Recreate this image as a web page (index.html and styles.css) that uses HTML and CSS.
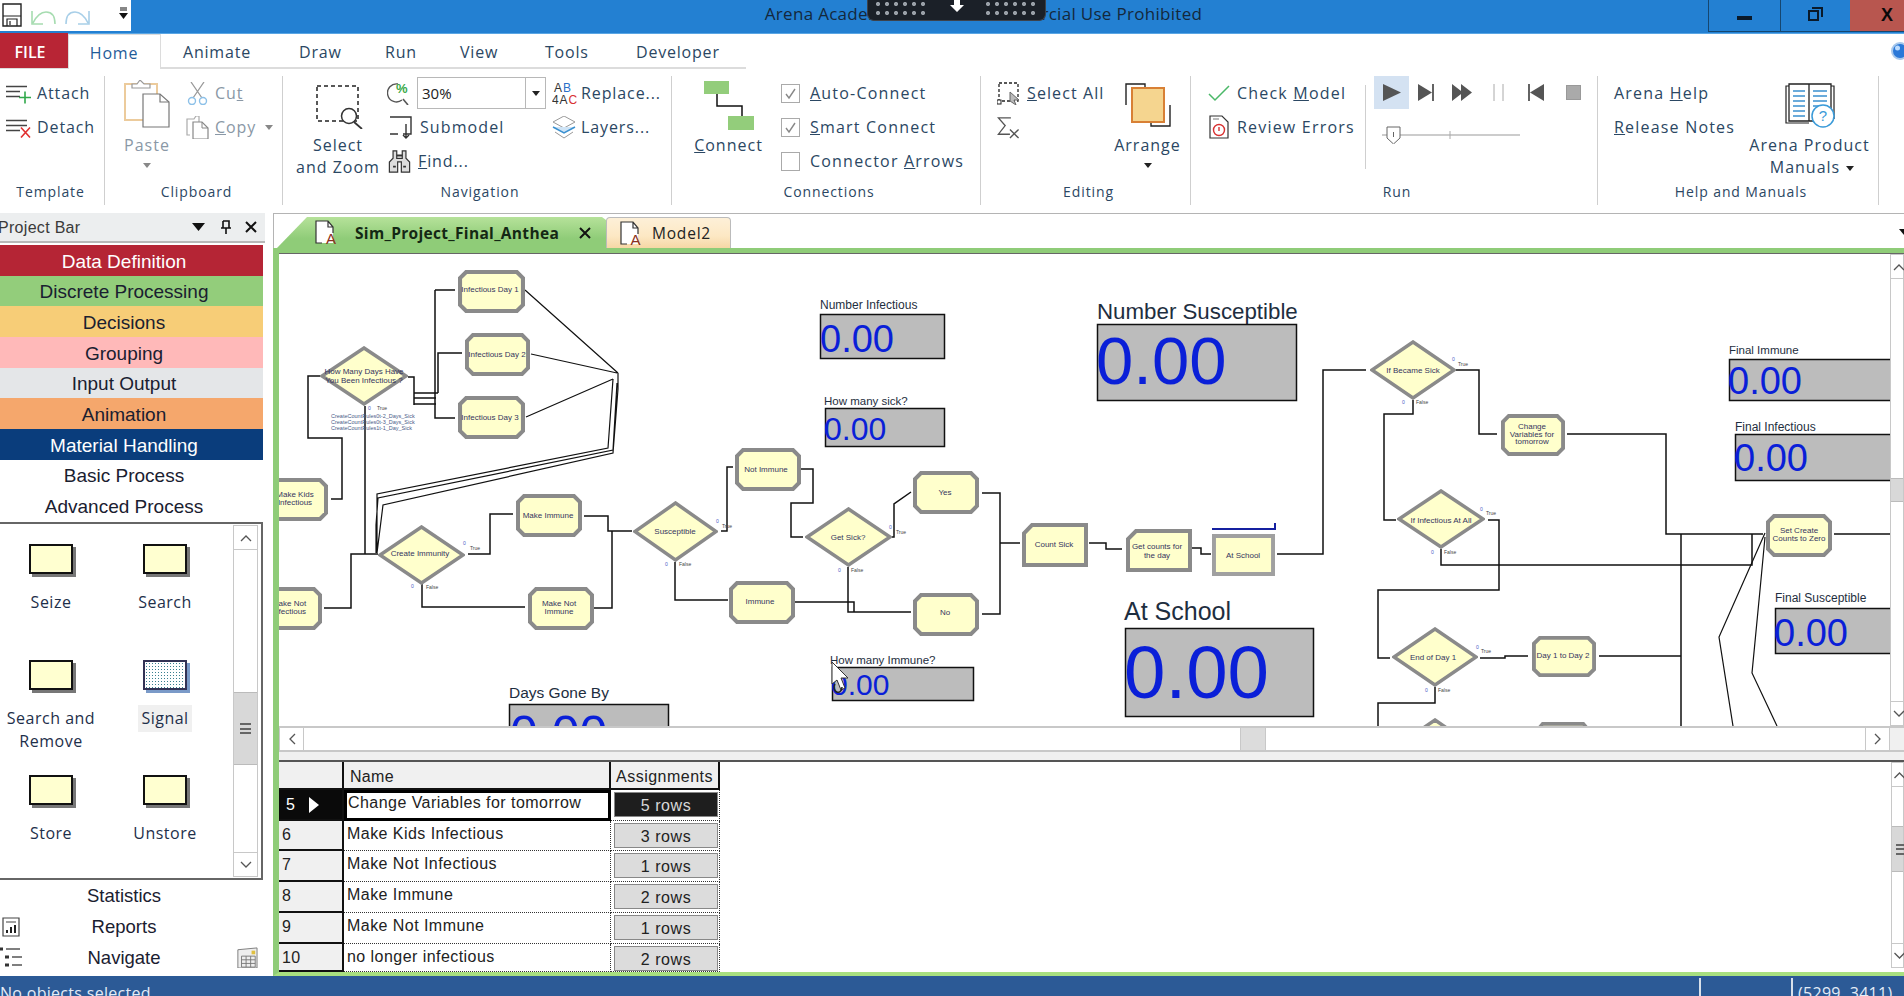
FILE: index.html
```html
<!DOCTYPE html>
<html lang="en">
<head>
<meta charset="utf-8">
<title>Arena Academic License - Commercial Use Prohibited</title>
<link rel="stylesheet" href="styles.css">
</head>
<body>
<div class="app">

  <header class="titlebar">
    <div class="qat">
      <svg class="qat-save" viewBox="0 0 20 24"><path d="M1 1H19V23H1Z" fill="none" stroke="#222" stroke-width="1.4"/><path d="M1 13H19M5 23V16H15V23M8 18V22" fill="none" stroke="#222" stroke-width="1.2"/></svg>
      <svg class="qat-undo" viewBox="0 0 25 16"><path d="M1 1V14H12M2 13C6 5 10 2 15 2C21 2 24 6 24 14" fill="none" stroke="#a6dcb0" stroke-width="1.6"/></svg>
      <svg class="qat-redo" viewBox="0 0 25 16"><path d="M24 1V14H13M23 13C19 5 15 2 10 2C4 2 1 6 1 14" fill="none" stroke="#a8cfe8" stroke-width="1.6"/></svg>
      <svg class="qat-more" viewBox="0 0 9 13"><path d="M1 1H8M1 3H8" stroke="#111" stroke-width="1.2"/><path d="M0 6H9L4.500 12Z" fill="#111"/></svg>
    </div>
    <div class="title">Arena Academic License - Commercial Use Prohibited</div>
    <div class="winbtns">
      <div class="winbtn"><span class="win-min"></span></div>
      <div class="winbtn"><svg class="win-icon" viewBox="0 0 15 14"><path d="M4 1H14V10M1 4H10V13H1Z" fill="none" stroke="#0a1a2a" stroke-width="2"/></svg></div>
      <div class="winbtn winclose">X</div>
    </div>
    <div class="remote">
      <span class="remote-dots"></span>
      <svg class="remote-arrow" viewBox="0 0 14 12"><path d="M4 0H10V5H14L7 12L0 5H4Z" fill="#fff"/></svg>
      <span class="remote-dots"></span>
    </div>
  </header>

  <nav class="tabrow">
    <div class="tabs">
      <div class="tab tab-file">FILE</div>
      <div class="tab tab-home">Home</div>
      <div class="tab tab-animate">Animate</div>
      <div class="tab tab-draw">Draw</div>
      <div class="tab tab-run">Run</div>
      <div class="tab tab-view">View</div>
      <div class="tab tab-tools">Tools</div>
      <div class="tab tab-dev">Developer</div>
    </div>
    <svg class="help-globe" viewBox="0 0 18 18"><circle cx="9" cy="9" r="8" fill="#2a78d8" stroke="#a8c8ec" stroke-width="2"/><circle cx="6.500" cy="6" r="2.500" fill="#bcdcff"/></svg>
  </nav>

  <section class="ribbon">
    <div class="group g-template">
      <div class="group-body">
        <div class="stack">
          <div class="rowbtn"><svg class="ic25" viewBox="0 0 25 20"><path d="M0 3H21M0 8H14M0 13H14" stroke="#444" stroke-width="1.4"/><path d="M19 8V20M13 14H25" stroke="#30a84a" stroke-width="1.6"/></svg><span>Attach</span></div>
          <div class="rowbtn"><svg class="ic25" viewBox="0 0 25 20"><path d="M0 3H21M0 8H21M0 13H14" stroke="#444" stroke-width="1.4"/><path d="M15 10L24 20M24 10L15 20" stroke="#e03030" stroke-width="1.6"/></svg><span>Detach</span></div>
        </div>
      </div>
      <div class="group-label">Template</div>
    </div>

    <div class="group g-clipboard">
      <div class="group-body">
        <div class="large paste">
          <svg class="large-icon ic-paste" viewBox="0 0 46 48"><path d="M1 4H33V40H1Z" fill="#fff" stroke="#eccb9c" stroke-width="2"/><path d="M8 8V4H13L16 0L20 4H26V8Z" fill="#fff" stroke="#999" stroke-width="1.2"/><path d="M19 14H36L45 22V47H19Z" fill="#fff" stroke="#777" stroke-width="1.2"/><path d="M36 14V22H45" fill="none" stroke="#777" stroke-width="1.2"/></svg>
          <div class="large-text dim">Paste</div>
          <i class="caret dimcaret"></i>
        </div>
        <div class="stack">
          <div class="rowbtn dim"><svg class="ic23" viewBox="0 0 21 23"><path d="M4 0L15 16M17 0L6 16" stroke="#999" stroke-width="1.3"/><circle cx="5" cy="19" r="3.500" fill="none" stroke="#8cc0e8" stroke-width="1.4"/><circle cx="16" cy="19" r="3.500" fill="none" stroke="#8cc0e8" stroke-width="1.4"/></svg><span>Cu<u>t</u></span></div>
          <div class="rowbtn dim"><svg class="ic23" viewBox="0 0 23 23"><path d="M4 19H1V3H8L10 0H13V6" fill="none" stroke="#aaa" stroke-width="1.2"/><path d="M7 6H16L22 12V23H7Z" fill="#fff" stroke="#888" stroke-width="1.2"/><path d="M16 6V12H22" fill="none" stroke="#888"/></svg><span><u>C</u>opy</span><i class="caret dimcaret caret-side"></i></div>
        </div>
      </div>
      <div class="group-label">Clipboard</div>
    </div>

    <div class="group g-nav">
      <div class="group-body">
        <div class="large zoomsel">
          <svg class="large-icon ic-select" viewBox="0 0 48 44"><path d="M1 1H42V36H1Z" fill="none" stroke="#222" stroke-width="1.5" stroke-dasharray="4 3"/><circle cx="33" cy="31" r="7.500" fill="#fff" stroke="#333" stroke-width="1.5"/><path d="M38 37L46 44" stroke="#333" stroke-width="1.8"/></svg>
          <div class="large-text">Select<br>and Zoom</div>
        </div>
        <div class="stack nav-mid">
          <div class="rowbtn">
            <svg class="ic25" viewBox="0 0 25 23"><path d="M11 2A9 9 0 1 0 15 18" fill="none" stroke="#555" stroke-width="1.4"/><path d="M16 17L21 23" stroke="#555" stroke-width="1.6"/><text class="pct" x="9" y="11">%</text></svg>
            <div class="combo"><span class="combo-val">30%</span><span class="combo-btn"><i class="caret"></i></span></div>
          </div>
          <div class="rowbtn submodel"><svg class="ic25" viewBox="0 0 25 23"><path d="M1 1H22V18H14M9 18H1Z" fill="none" stroke="#333" stroke-width="1.4"/><path d="M17 8V22M14 19L17 22L20 19" fill="none" stroke="#333" stroke-width="1.4"/></svg><span>Submodel</span></div>
          <div class="rowbtn"><svg class="ic25" viewBox="0 0 24 25"><path d="M5 1H9V9H15V1H19V9L23 13V24H14V13H10V24H1V13L5 9Z" fill="#ddd" stroke="#333" stroke-width="1.3"/><path d="M5 18H8M16 18H19M9 6H15" stroke="#333" stroke-width="2"/></svg><span class="find"><u>F</u>ind...</span></div>
        </div>
        <div class="stack nav-right">
          <div class="rowbtn"><svg class="ic25" viewBox="0 0 25 23"><text class="ab" x="2" y="10">A<tspan class="ab-blue">B</tspan></text><text class="ab" x="0" y="22">4A<tspan class="ab-red">C</tspan></text></svg><span>Replace...</span></div>
          <div class="rowbtn"><svg class="ic25" viewBox="0 0 25 23"><path d="M12 0L23 6L12 12L1 6Z" fill="#fff" stroke="#999"/><path d="M1 11L12 17L23 11" fill="#cfe4f6" stroke="#3a90d0" stroke-width="1.5"/><path d="M3 16L12 22L21 16" fill="none" stroke="#999"/></svg><span>Layers...</span></div>
        </div>
      </div>
      <div class="group-label">Navigation</div>
    </div>

    <div class="group g-conn">
      <div class="group-body">
        <div class="large connect">
          <svg class="large-icon ic-connect" viewBox="0 0 50 49"><rect x="0" y="0" width="25" height="13" fill="#93cd7b"/><rect x="24" y="35" width="26" height="14" fill="#93cd7b"/><path d="M13 13V25H38V35" fill="none" stroke="#111" stroke-width="1.5"/></svg>
          <div class="large-text"><u>C</u>onnect</div>
        </div>
        <div class="stack">
          <div class="rowbtn"><span class="check"><svg viewBox="0 0 17 17"><path d="M4 9L7 13L13 4" fill="none" stroke="#888" stroke-width="1.4"/></svg></span><span><u>A</u>uto-Connect</span></div>
          <div class="rowbtn"><span class="check"><svg viewBox="0 0 17 17"><path d="M4 9L7 13L13 4" fill="none" stroke="#888" stroke-width="1.4"/></svg></span><span><u>S</u>mart Connect</span></div>
          <div class="rowbtn"><span class="check"></span><span>Connector <u>A</u>rrows</span></div>
        </div>
      </div>
      <div class="group-label">Connections</div>
    </div>

    <div class="group g-edit">
      <div class="group-body">
        <div class="stack">
          <div class="rowbtn"><svg class="ic23" viewBox="0 0 23 23"><path d="M2 1H21V19H2Z" fill="none" stroke="#222" stroke-width="1.3" stroke-dasharray="3 2"/><rect x="0" y="18" width="4" height="4" fill="#fff" stroke="#222"/><path d="M13 10L22 18H17L19 23L13 19Z" fill="#bbb" stroke="#666"/></svg><span><u>S</u>elect All</span></div>
          <div class="rowbtn"><svg class="ic23" viewBox="0 0 23 24"><path d="M14 2H1L8 10L1 19H13" fill="none" stroke="#555" stroke-width="1.4"/><path d="M13 14L22 23M22 14L13 23" stroke="#555" stroke-width="1.4"/></svg></div>
        </div>
        <div class="large arrange">
          <svg class="large-icon ic-arrange" viewBox="0 0 46 44"><path d="M1 22V1H20V5" fill="none" stroke="#222" stroke-width="1.4"/><path d="M45 22V43H26V39" fill="none" stroke="#222" stroke-width="1.4"/><rect x="7" y="5" width="32" height="34" fill="#f5d58f" stroke="#d88035" stroke-width="2"/></svg>
          <div class="large-text">Arrange</div>
          <i class="caret"></i>
        </div>
      </div>
      <div class="group-label">Editing</div>
    </div>

    <div class="group g-run">
      <div class="group-body">
        <div class="stack">
          <div class="rowbtn"><svg class="ic22" viewBox="0 0 22 17"><path d="M1 9L7 15L21 1" fill="none" stroke="#4ab868" stroke-width="1.5"/></svg><span>Check <u>M</u>odel</span></div>
          <div class="rowbtn"><svg class="ic22 ic-review" viewBox="0 0 20 24"><path d="M1 1H13L19 7V23H1Z" fill="#fff" stroke="#333" stroke-width="1.2"/><path d="M4 4H10" stroke="#777"/><circle cx="10" cy="15" r="5.500" fill="#fff" stroke="#d83030" stroke-width="1.4"/><path d="M10 12V16" stroke="#d83030" stroke-width="1.4"/></svg><span>Review Errors</span></div>
        </div>
        <div class="run-sep"></div>
        <div class="transport">
          <div class="transport-row">
            <div class="t-play"><svg viewBox="0 0 18 17"><path d="M0 0L18 8.500L0 17Z" fill="#555"/></svg></div>
            <svg class="t-step" viewBox="0 0 16 17"><path d="M0 0L14 8.500L0 17Z" fill="#555"/><path d="M15 0V17" stroke="#222" stroke-width="1.4"/></svg>
            <svg class="t-ff" viewBox="0 0 20 17"><path d="M0 0L11 8.500L0 17ZM9 0L20 8.500L9 17Z" fill="#555"/></svg>
            <svg class="t-pause" viewBox="0 0 11 17"><path d="M1 0V17M10 0V17" stroke="#aaa"/></svg>
            <svg class="t-rew" viewBox="0 0 16 17"><path d="M16 0L2 8.500L16 17Z" fill="#555"/><path d="M1 0V17" stroke="#222" stroke-width="1.4"/></svg>
            <span class="t-stop"></span>
          </div>
          <div class="slider">
            <svg viewBox="0 0 138 18"><path d="M0 9H138" stroke="#bbb" stroke-width="1.6"/><path d="M68 5V13" stroke="#aaa"/><path d="M5 1H18V12L11.500 18L5 12Z" fill="#fff" stroke="#666"/><path d="M11.500 6V11" stroke="#666"/></svg>
          </div>
        </div>
      </div>
      <div class="group-label">Run</div>
    </div>

    <div class="group g-help">
      <div class="group-body">
        <div class="stack">
          <div class="rowbtn"><span>Arena <u>H</u>elp</span></div>
          <div class="rowbtn"><span><u>R</u>elease Notes</span></div>
        </div>
        <div class="large manuals">
          <svg class="large-icon ic-book" viewBox="0 0 50 45"><path d="M4 3H1V40H24" fill="none" stroke="#222" stroke-width="1.2"/><path d="M46 3H49V36" fill="none" stroke="#222" stroke-width="1.2"/><path d="M4 1H24V38H4ZM24 1H46V38H24Z" fill="#fff" stroke="#222" stroke-width="1.3"/><path d="M8 8H20M8 13H20M8 18H20M8 23H20M8 28H20M8 33H20M28 8H42M28 13H42M28 18H42M28 23H38" stroke="#3a90d0" stroke-width="1.3"/><circle cx="38" cy="33" r="11" fill="#fff" stroke="#3a9ad8" stroke-width="1.5"/><text class="qmark" x="38" y="38">?</text></svg>
          <div class="large-text">Arena Product<br><span class="manuals-line">Manuals<i class="caret caret-inline"></i></span></div>
        </div>
      </div>
      <div class="group-label">Help and Manuals</div>
    </div>
  </section>

  <main class="workspace">
    <aside class="panel">
      <div class="panel-head">
        <span class="panel-title">Project Bar</span>
        <svg class="panel-icon" viewBox="0 0 13 8"><path d="M0 0H13L6.500 8Z" fill="#111"/></svg>
        <svg class="panel-icon pin" viewBox="0 0 10 14"><path d="M2 1H8V8H10M0 8H10M5 8V14M2 1V8" fill="none" stroke="#111" stroke-width="1.6"/></svg>
        <svg class="panel-icon close" viewBox="0 0 12 12"><path d="M1 1L11 11M11 1L1 11" stroke="#111" stroke-width="2"/></svg>
      </div>
      <div class="cats">
        <div class="cat c-data">Data Definition</div>
        <div class="cat c-disc">Discrete Processing</div>
        <div class="cat c-dec">Decisions</div>
        <div class="cat c-grp">Grouping</div>
        <div class="cat c-io">Input Output</div>
        <div class="cat c-anim">Animation</div>
        <div class="cat c-mat">Material Handling</div>
        <div class="cat">Basic Process</div>
        <div class="cat">Advanced Process</div>
      </div>
      <div class="modules">
        <div class="module-grid">
          <div class="module"><span class="mod-ic"></span><span class="mod-label">Seize</span></div>
          <div class="module"><span class="mod-ic"></span><span class="mod-label">Search</span></div>
          <div class="module"><span class="mod-ic"></span><span class="mod-label">Search and<br>Remove</span></div>
          <div class="module"><span class="mod-ic mod-signal"></span><span class="mod-label mod-selected">Signal</span></div>
          <div class="module"><span class="mod-ic"></span><span class="mod-label">Store</span></div>
          <div class="module"><span class="mod-ic"></span><span class="mod-label">Unstore</span></div>
        </div>
        <div class="scroll-v scroll-mod">
          <div class="sb-btn"><svg viewBox="0 0 12 8"><path d="M1 7L6 2L11 7" fill="none" stroke="#555" stroke-width="1.3"/></svg></div>
          <div class="sb-track"><div class="sb-thumb"><span class="grip"></span></div></div>
          <div class="sb-btn"><svg viewBox="0 0 12 8"><path d="M1 1L6 6L11 1" fill="none" stroke="#555" stroke-width="1.3"/></svg></div>
        </div>
      </div>
      <div class="panel-foot">
        <div class="foot-row"><span></span><span class="foot-text">Statistics</span><span></span></div>
        <div class="foot-row"><svg class="foot-ic" viewBox="0 0 18 20"><path d="M1 1H17V19H1Z" fill="#fff" stroke="#444" stroke-width="1.2"/><path d="M4 5H14" stroke="#444"/><path d="M5 16V13M9 16V10M13 16V8" stroke="#222" stroke-width="2"/></svg><span class="foot-text">Reports</span><span></span></div>
        <div class="foot-row"><svg class="foot-ic" viewBox="0 0 22 21"><path d="M0 2H3M5 10H9M5 18H9" stroke="#333" stroke-width="3"/><path d="M6 2H20M12 10H22M12 18H22" stroke="#555" stroke-width="1.3"/></svg><span class="foot-text">Navigate</span><svg class="foot-ic foot-right" viewBox="0 0 22 23"><path d="M1 23V3L22 1V23Z" fill="#eee" stroke="#777"/><path d="M5 10H20V22H5ZM5 14H20M5 18H20M10 10V22M15 10V22" fill="none" stroke="#777"/><path d="M16 4H20V8H16Z" fill="#e0c040"/></svg></div>
      </div>
    </aside>

    <section class="doc">
      <div class="doctabs">
        <div class="doctab doctab-active">
          <svg class="doc-ic" viewBox="0 0 23 25"><path d="M1 1H13L18 7V23H1Z" fill="#fff"/><path d="M7 23H1V1H13L18 7V13M13 1V7H18" fill="none" stroke="#333" stroke-width="1.2"/><text class="doc-a" x="16" y="24">A</text></svg>
          <span class="doctab-name">Sim_Project_Final_Anthea</span>
          <svg class="doc-x" viewBox="0 0 12 12"><path d="M1 1L11 11M11 1L1 11" stroke="#111" stroke-width="2"/></svg>
        </div>
        <div class="doctab doctab-other">
          <svg class="doc-ic" viewBox="0 0 23 25"><path d="M1 1H13L18 7V23H1Z" fill="#fff"/><path d="M7 23H1V1H13L18 7V13M13 1V7H18" fill="none" stroke="#333" stroke-width="1.2"/><text class="doc-a" x="16" y="24">A</text></svg>
          <span>Model2</span>
        </div>
        <svg class="doctabs-more" viewBox="0 0 10 6"><path d="M0 0H10L5 6Z" fill="#111"/></svg>
      </div>

      <div class="docframe">
        <div class="canvas-row">
          <svg class="canvas" viewBox="279 254 1611 472" xmlns="http://www.w3.org/2000/svg">
            <defs>
              <symbol id="p" viewBox="0 0 66 43" preserveAspectRatio="none"><path d="M8 2H58L64 8V35L58 41H8L2 35V8Z" fill="#ffffcc" stroke="#8a8a8a" stroke-width="4"/></symbol>
              <symbol id="d" viewBox="0 0 88 60" preserveAspectRatio="none"><path d="M44 2L86 30L44 58L2 30Z" fill="#ffffcc" stroke="#8a8a8a" stroke-width="3.500"/></symbol>
              <symbol id="c" viewBox="0 0 66 43" preserveAspectRatio="none"><path d="M10 2H64V41H2V10Z" fill="#ffffcc" stroke="#8a8a8a" stroke-width="4"/></symbol>
              <symbol id="r" viewBox="0 0 64 43" preserveAspectRatio="none"><path d="M2 2H62V41H2Z" fill="#ffffcc" stroke="#a0a0a0" stroke-width="4"/></symbol>
            </defs>

            <g class="wires">
              <path d="M408 377H414V405M414 393H438M414 398H436M414 404H436M435 290H455M435 290V418H455M438 393V353H462"/>
              <path d="M320 376H308V438H342V499H331"/>
              <path d="M365 406V554M324 608H351V554H378"/>
              <path d="M468 554H490V514H513M422 584V607H525M584 516H608V531H632M594 608H612V531"/>
              <path d="M721 531H727V467H733M675 562V600H728M801 469H813V503H791V537H803"/>
              <path d="M892 537H894V504L911 492M848 567V612H911M795 602H854V612"/>
              <path d="M982 493H1000V614H982M1000 543H1020M1089 543H1106V549H1122M1192 548H1201V554H1211"/>
              <path d="M1277 554H1323V370H1366M1456 370H1479V434H1497M1413 400V414H1384V520H1396"/>
              <path d="M1567 434H1666V534H1763M1681 534V726M1488 520H1499V590H1378V658H1390M1441 549V565H1752V534"/>
              <path d="M1480 658H1505V656H1528M1599 656H1681M1435 687V703H1378V726M1834 534H1890"/>
            </g>
            <g class="wires-thin">
              <path d="M525 290L618 373M531 354L617 373M526 417L613 379"/>
              <path d="M618 373V389L613 453L383 505L377 553M613 379L608 448L377 494V553M617 383L613 450L378 498L376 525V553"/>
              <path d="M1765 533L1719 637L1733 726M1765 537L1760 590L1752 673L1777 726"/>
            </g>

            <use href="#p" x="458" y="270" width="67" height="43"/><text class="nt" x="490" y="292">Infectious Day 1</text>
            <use href="#p" x="465" y="333" width="65" height="43"/><text class="nt" x="497" y="357">Infectious Day 2</text>
            <use href="#p" x="458" y="396" width="67" height="43"/><text class="nt" x="490" y="420">Infectious Day 3</text>
            <use href="#d" x="320" y="346" width="88" height="60"/><text class="nt" x="364" y="374">How Many Days Have</text><text class="nt" x="364" y="383">You Been Infectious ?</text>
            <text class="sm blue" x="368" y="410">0</text><text class="sm" x="377" y="410">True</text>
            <text class="cc" x="331" y="418">CreateCountRules0t-2_Days_Sick</text>
            <text class="cc" x="331" y="424">CreateCountRules0t-3_Days_Sick</text>
            <text class="cc" x="331" y="430">CreateCountRules1t-1_Day_Sick</text>
            <use href="#p" x="262" y="478" width="66" height="43"/><text class="nt" x="295" y="497">Make Kids</text><text class="nt" x="295" y="505">Infectious</text>
            <use href="#p" x="256" y="587" width="66" height="43"/><text class="nt" x="289" y="606">Make Not</text><text class="nt" x="289" y="614">Infectious</text>
            <use href="#d" x="378" y="525" width="87" height="60"/><text class="nt" x="420" y="556">Create Immunity</text>
            <text class="sm blue" x="463" y="545">0</text><text class="sm" x="470" y="550">True</text><text class="sm blue" x="411" y="588">0</text><text class="sm" x="426" y="589">False</text>
            <use href="#p" x="516" y="494" width="66" height="43"/><text class="nt" x="548" y="518">Make Immune</text>
            <use href="#p" x="528" y="587" width="66" height="43"/><text class="nt" x="559" y="606">Make Not</text><text class="nt" x="559" y="614">Immune</text>
            <use href="#d" x="633" y="501" width="85" height="61"/><text class="nt" x="675" y="534">Susceptible</text>
            <text class="sm blue" x="716" y="523">0</text><text class="sm" x="722" y="528">True</text><text class="sm blue" x="665" y="566">0</text><text class="sm" x="679" y="566">False</text>
            <use href="#p" x="735" y="448" width="66" height="43"/><text class="nt" x="766" y="472">Not Immune</text>
            <use href="#d" x="805" y="507" width="87" height="60"/><text class="nt" x="848" y="540">Get Sick?</text>
            <text class="sm blue" x="889" y="529">0</text><text class="sm" x="896" y="534">True</text><text class="sm blue" x="838" y="572">0</text><text class="sm" x="851" y="572">False</text>
            <use href="#p" x="913" y="471" width="66" height="43"/><text class="nt" x="945" y="495">Yes</text>
            <use href="#p" x="913" y="593" width="66" height="43"/><text class="nt" x="945" y="615">No</text>
            <use href="#p" x="729" y="581" width="66" height="43"/><text class="nt" x="760" y="604">Immune</text>
            <use href="#c" x="1022" y="523" width="66" height="44"/><text class="nt" x="1054" y="547">Count Sick</text>
            <use href="#c" x="1126" y="529" width="66" height="43"/><text class="nt" x="1157" y="549">Get counts for</text><text class="nt" x="1157" y="558">the day</text>
            <use href="#r" x="1212" y="534" width="63" height="42"/><text class="nt" x="1243" y="558">At School</text>
            <path class="blue-line" d="M1212 529H1275V523"/>

            <text class="lab l12" x="820" y="309">Number Infectious</text>
            <rect class="vbox" x="820.500" y="314.500" width="124" height="44"/><text class="val v38" x="820" y="352">0.00</text>
            <text class="lab l115" x="824" y="405">How many sick?</text>
            <rect class="vbox" x="825.500" y="408.500" width="119" height="38"/><text class="val v32" x="824" y="439.500">0.00</text>
            <text class="lab l22" x="1097" y="319">Number Susceptible</text>
            <rect class="vbox" x="1097.500" y="324.500" width="199" height="76"/><text class="val v67" x="1096" y="384">0.00</text>
            <text class="lab l25" x="1124" y="620">At School</text>
            <rect class="vbox" x="1125.500" y="628.500" width="188" height="88"/><text class="val v74" x="1124" y="698">0.00</text>
            <text class="lab l115" x="830" y="664">How many Immune?</text>
            <rect class="vbox" x="832.500" y="667.500" width="141" height="33"/><text class="val v30" x="831" y="694.500">0.00</text>
            <text class="lab l155" x="509" y="698">Days Gone By</text>
            <rect class="vbox" x="509.500" y="704.500" width="159" height="60"/><text class="val v50" x="510" y="751">0.00</text>
            <path class="cursor" d="M832 662V684L837 680L841 690L845 688L841 678L848 678Z"/>
            <path class="cursor-ring" d="M835 684A4 5 0 1 0 842 687"/>

            <use href="#d" x="1370" y="340" width="86" height="60"/><text class="nt" x="1413" y="373">If Became Sick</text>
            <text class="sm blue" x="1452" y="361">0</text><text class="sm" x="1458" y="366">True</text><text class="sm blue" x="1402" y="404">0</text><text class="sm" x="1416" y="404">False</text>
            <use href="#p" x="1501" y="414" width="64" height="42"/><text class="nt" x="1532" y="429">Change</text><text class="nt" x="1532" y="436.500">Variables for</text><text class="nt" x="1532" y="444">tomorrow</text>
            <use href="#d" x="1397" y="489" width="88" height="60"/><text class="nt" x="1441" y="523">If Infectious At All</text>
            <text class="sm blue" x="1480" y="511">0</text><text class="sm" x="1486" y="515">True</text><text class="sm blue" x="1431" y="554">0</text><text class="sm" x="1444" y="554">False</text>
            <use href="#d" x="1392" y="627" width="86" height="60"/><text class="nt" x="1433" y="660">End of Day 1</text>
            <text class="sm blue" x="1476" y="649">0</text><text class="sm" x="1481" y="653">True</text><text class="sm blue" x="1425" y="692">0</text><text class="sm" x="1438" y="692">False</text>
            <use href="#p" x="1532" y="636" width="64" height="41"/><text class="nt" x="1563" y="658">Day 1 to Day 2</text>
            <use href="#p" x="1766" y="514" width="66" height="43"/><text class="nt" x="1799" y="533">Set Create</text><text class="nt" x="1799" y="541">Counts to Zero</text>
            <use href="#d" x="1392" y="718" width="86" height="60"/>
            <use href="#p" x="1536" y="722" width="54" height="41"/>

            <text class="lab l115" x="1729" y="354">Final Immune</text>
            <rect class="vbox" x="1729.500" y="359.500" width="200" height="41"/><text class="val v38" x="1728" y="394">0.00</text>
            <text class="lab l12" x="1735" y="431">Final Infectious</text>
            <rect class="vbox" x="1735.500" y="434.500" width="200" height="46"/><text class="val v38" x="1734" y="471">0.00</text>
            <text class="lab l12" x="1775" y="602">Final Susceptible</text>
            <rect class="vbox" x="1775.500" y="608.500" width="200" height="45"/><text class="val v38" x="1774" y="646">0.00</text>
          </svg>
          <div class="scroll-v scroll-canvas">
            <div class="sb-btn"><svg viewBox="0 0 12 8"><path d="M1 7L6 2L11 7" fill="none" stroke="#555" stroke-width="1.3"/></svg></div>
            <div class="sb-track"><div class="sb-thumb thumb-canvas"></div></div>
            <div class="sb-btn"><svg viewBox="0 0 12 8"><path d="M1 1L6 6L11 1" fill="none" stroke="#555" stroke-width="1.3"/></svg></div>
          </div>
        </div>
        <div class="scroll-h">
          <div class="sb-btn-h"><svg viewBox="0 0 8 12"><path d="M7 1L2 6L7 11" fill="none" stroke="#555" stroke-width="1.3"/></svg></div>
          <div class="sb-track-h"><div class="sb-thumb-h"></div></div>
          <div class="sb-btn-h"><svg viewBox="0 0 8 12"><path d="M1 1L6 6L1 11" fill="none" stroke="#555" stroke-width="1.3"/></svg></div>
          <div class="scroll-corner"></div>
        </div>
        <div class="sash"></div>
        <div class="tablepane">
          <div class="sheet">
            <div class="cell rh"></div><div class="cell hd name-hd">Name</div><div class="cell hd asg-hd">Assignments</div>
            <div class="cell rh rh-sel">5<svg class="row-arrow" viewBox="0 0 10 16"><path d="M0 0L10 8L0 16Z" fill="#fff"/></svg></div><div class="cell nm nm-sel">Change Variables for tomorrow</div><div class="cell as as-sel"><span class="rows rows-sel">5 rows</span></div>
            <div class="cell rh">6</div><div class="cell nm">Make Kids Infectious</div><div class="cell as"><span class="rows">3 rows</span></div>
            <div class="cell rh">7</div><div class="cell nm">Make Not Infectious</div><div class="cell as"><span class="rows">1 rows</span></div>
            <div class="cell rh">8</div><div class="cell nm">Make Immune</div><div class="cell as"><span class="rows">2 rows</span></div>
            <div class="cell rh">9</div><div class="cell nm">Make Not Immune</div><div class="cell as"><span class="rows">1 rows</span></div>
            <div class="cell rh">10</div><div class="cell nm">no longer infectious</div><div class="cell as"><span class="rows">2 rows</span></div>
          </div>
          <div class="scroll-v scroll-table">
            <div class="sb-btn"><svg viewBox="0 0 12 8"><path d="M1 7L6 2L11 7" fill="none" stroke="#555" stroke-width="1.3"/></svg></div>
            <div class="sb-track"><div class="sb-thumb thumb-table"><span class="grip"></span></div></div>
            <div class="sb-btn"><svg viewBox="0 0 12 8"><path d="M1 1L6 6L11 1" fill="none" stroke="#555" stroke-width="1.3"/></svg></div>
          </div>
        </div>
      </div>
    </section>
  </main>

  <footer class="status">
    <span class="status-msg">No objects selected</span>
    <span class="status-cell status-mid"></span>
    <span class="status-cell status-xy">(5299, 3411)</span>
  </footer>
</div>
</body>
</html>
```

FILE: styles.css
```css
* { box-sizing: border-box; }
html, body { margin: 0; padding: 0; background: #fff; overflow: hidden; }
.app {
  width: 1904px; height: 996px; overflow: hidden; display: flex; flex-direction: column;
  font-family: "Open Sans", sans-serif; font-size: 16px; font-weight: 500; color: #2b4763; background: #fff;
}

/* title bar */
.titlebar { position: relative; flex: 0 0 34px; display: flex; background: #2380d2; border-bottom: 1px solid #5aa6e4; }
.qat { width: 131px; height: 31px; background: #fff; display: flex; align-items: flex-start; }
.qat svg { display: block; }
.qat-save { width: 20px; height: 24px; margin: 3px 0 0 2px; }
.qat-undo { width: 25px; height: 16px; margin: 10px 0 0 9px; }
.qat-redo { width: 25px; height: 16px; margin: 10px 0 0 9px; }
.qat-more { width: 9px; height: 13px; margin: 7px 0 0 29px; }
.title { flex: 1; text-align: center; padding-left: 128px; line-height: 28px; font-size: 17px; font-weight: 400; letter-spacing: .3px; color: #14283c; }
.winbtns { display: flex; height: 32px; }
.winbtn { width: 72px; display: flex; align-items: center; justify-content: center; border-left: 1px solid #15466f; border-bottom: 1px solid #15466f; }
.winbtn:nth-child(2) { width: 70px; }
.winclose { width: 54px; background: #b8564f; color: #0a0a0a; font: 700 18px "Liberation Sans", sans-serif; padding-left: 20px; border-left: 0; }
.win-min { width: 15px; height: 4px; background: #0a1a2a; margin-top: 4px; }
.win-icon { width: 15px; height: 14px; margin-top: -4px; }
.remote { position: absolute; left: 867px; top: 0; width: 179px; height: 21px; background: #1b2028; border: 1px solid #3c424b; border-top: 0; border-radius: 0 0 7px 7px; display: flex; justify-content: center; gap: 22px; padding: 2px 0 0; }
.remote-dots { width: 52px; height: 15px; background-image: radial-gradient(circle at 2px 2px, #9aa0a8 2px, transparent 2.2px); background-size: 9px 9px; }
.remote-arrow { width: 14px; height: 12px; margin-top: -2px; }

/* ribbon tabs */
.tabrow { flex: 0 0 35px; display: flex; align-items: flex-end; position: relative; }
.tabs { width: 746px; height: 35px; display: flex; border-bottom: 2px solid #dcdcdc; }
.tab { height: 33px; line-height: 37px; letter-spacing: .8px; color: #2b4763; flex: none; }
.tab-file { width: 68px; height: 35px; margin-top: -1px; background: #b82535; color: #fff; font-weight: 600; text-align: center; letter-spacing: 0; line-height: 38px; padding-right: 8px; }
.tab-home { width: 93px; height: 35px; border: 1px solid #dcdcdc; border-bottom: 0; background: #fff; text-align: center; color: #1f5c99; padding-right: 1px; }
.tab-animate { margin-left: 22px; width: 116px; }
.tab-draw { width: 86px; }
.tab-run { width: 75px; }
.tab-view { width: 85px; }
.tab-tools { width: 91px; }
.tab-dev { width: 88px; }
.help-globe { position: absolute; left: 1891px; top: 8px; width: 18px; height: 18px; }

/* ribbon */
.ribbon { flex: 0 0 136px; display: flex; padding-top: 7px; }
.group { display: flex; flex-direction: column; height: 129px; border-right: 1px solid #cfcfcf; }
.group-body { display: flex; height: 103px; flex: none; }
.group-label { height: 26px; line-height: 26px; font-size: 14px; text-align: center; padding-left: 6px; letter-spacing: .9px; }
.g-template { width: 105px; padding-left: 6px; }
.g-template .group-label { padding: 0 9px 0 0; }
.g-clipboard { width: 178px; padding-left: 19px; }
.g-clipboard .group-label { margin-left: -19px; }
.g-nav { width: 389px; padding-left: 14px; }
.g-nav .group-label { margin-left: -14px; }
.g-conn { width: 309px; padding-left: 21px; }
.g-conn .group-label { margin-left: -21px; }
.g-edit { width: 210px; padding-left: 16px; }
.g-edit .group-label { margin-left: -16px; }
.g-run { width: 407px; padding-left: 17px; }
.g-run .group-label { margin-left: -17px; }
.g-help { width: 281px; padding-left: 16px; }
.g-help .group-label { margin-left: -16px; }

.stack { display: flex; flex-direction: column; flex: none; }
.rowbtn { display: flex; align-items: center; height: 34px; gap: 6px; white-space: nowrap; letter-spacing: .9px; }
.g-conn .rowbtn, .g-run .rowbtn, .g-help .rowbtn { letter-spacing: 1.200px; }
.g-edit .rowbtn { letter-spacing: 1.100px; }
.rowbtn svg { flex: none; display: block; }
.ic25 { width: 25px; height: 23px; }
.ic23 { width: 23px; height: 23px; }
.ic22 { width: 22px; height: 17px; }
.ic-review { height: 24px; }
.dim { color: #8a98a6; }
.large { display: flex; flex-direction: column; align-items: center; flex: none; }
.large-icon { height: 58px; display: block; flex: none; }
.large-text { line-height: 22px; text-align: center; letter-spacing: 1px; white-space: nowrap; }
.caret { display: block; width: 0; height: 0; border: 4px solid transparent; border-top: 5px solid #222; border-bottom: 0; }
.dimcaret { border-top-color: #888; }
.caret-side { margin-left: 3px; }
.caret-inline { display: inline-block; margin-left: 6px; vertical-align: middle; }
.large > .caret { margin-top: 7px; }

.paste { width: 46px; }
.ic-paste { width: 46px; height: 48px; margin: 4px 0 6px; }
.g-clipboard .stack { margin-left: 16px; }
.g-clipboard .rowbtn { gap: 6px; }
.zoomsel { width: 82px; }
.ic-select { width: 48px; height: 44px; margin: 9px 0 5px 4px; }
.nav-mid { margin-left: 8px; width: 159px; }
.nav-mid .rowbtn { gap: 5px; }
.nav-mid .submodel { gap: 6px; padding-left: 2px; letter-spacing: 1.100px; }
.find { margin-left: 1px; }
.pct { font: 700 13px "Liberation Sans", sans-serif; fill: #38a848; }
.ab { font: 12px "Liberation Sans", sans-serif; fill: #333; }
.ab-blue { fill: #2a70c8; }
.ab-red { fill: #d83030; }
.combo { width: 129px; height: 32px; border: 1px solid #b8b8b8; display: flex; align-items: center; font-size: 15px; font-weight: 400; letter-spacing: 0; color: #222; }
.combo-val { flex: 1; padding-left: 4px; }
.combo-btn { width: 20px; height: 100%; border-left: 1px solid #b8b8b8; display: flex; align-items: center; justify-content: center; }
.nav-right { margin-left: 6px; }
.nav-right .rowbtn { gap: 4px; }

.connect { width: 71px; }
.ic-connect { width: 50px; height: 49px; margin: 5px 0 4px; }
.g-conn .stack { margin-left: 17px; }
.g-conn .rowbtn { gap: 10px; }
.check { width: 19px; height: 19px; border: 1px solid #aaa; display: block; flex: none; }
.check svg { width: 17px; height: 17px; }

.g-edit .stack { width: 107px; }
.g-edit .rowbtn { gap: 7px; }
.arrange { width: 67px; margin-left: 10px; }
.ic-arrange { width: 46px; height: 44px; margin: 7px 0 7px; }

.g-run .stack { width: 147px; }
.g-run .rowbtn { gap: 7px; }
.g-run .rowbtn .ic-review { width: 22px; }
.run-sep { width: 1px; height: 84px; margin: 9px 8px 0 10px; background: #cfcfcf; }
.transport { width: 207px; }
.transport-row { display: flex; align-items: center; height: 33px; }
.transport-row svg { display: block; height: 17px; flex: none; }
.t-play { width: 36px; height: 33px; background: #d4e2f2; display: flex; align-items: center; justify-content: center; }
.t-play svg { width: 18px; }
.t-step { width: 16px; margin-left: 9px; }
.t-ff { width: 20px; margin-left: 18px; }
.t-pause { width: 11px; margin-left: 21px; }
.t-rew { width: 16px; margin-left: 24px; }
.t-stop { width: 15px; height: 15px; background: #aaa; border: 1px solid #999; margin-left: 22px; }
.slider { margin: 17px 0 0 8px; width: 138px; height: 18px; }
.slider svg { display: block; width: 138px; height: 18px; }

.g-help .stack { width: 135px; }
.manuals { width: 121px; }
.ic-book { width: 50px; height: 45px; margin: 7px 0 6px; }
.qmark { font: 15px "Liberation Sans", sans-serif; fill: #3a9ad8; text-anchor: middle; }
.manuals-line { padding-left: 5px; }

/* workspace */
.workspace { flex: 1; display: flex; min-height: 0; padding-top: 8px; }
.panel { width: 280px; margin-left: -15px; flex: none; display: flex; flex-direction: column; height: 760px; }
.panel-head { height: 30px; background: #eceeef; border-bottom: 2px solid #b8b8b8; display: flex; align-items: center; padding: 0 8px 0 13px; color: #333; }
.panel-title { flex: 1; font: 16px "Liberation Sans", sans-serif; letter-spacing: .3px; color: #3a3a3a; padding-top: 2px; }
.panel-icon { width: 13px; height: 8px; display: block; }
.panel-icon.pin { width: 10px; height: 14px; margin-left: 16px; }
.panel-icon.close { width: 12px; height: 12px; margin-left: 14px; }
.cats { width: 278px; margin-top: 2px; height: 278px; display: grid; grid-auto-rows: 1fr; }
.cat { display: flex; align-items: center; justify-content: center; font: 19px "Liberation Sans", sans-serif; color: #1a2030; padding-top: 3px; }
.c-data { background: #b52535; color: #fff; }
.c-disc { background: #93cd7b; }
.c-dec { background: #f7cd77; }
.c-grp { background: #ffb9b9; }
.c-io { background: #e4e6e8; }
.c-anim { background: #f5a76c; }
.c-mat { background: #0a3d7c; color: #fff; }
.modules { width: 278px; height: 358px; margin-top: 1px; border: 2px solid #666; border-left: 0; display: flex; background: #fff; }
.module-grid { flex: 1; padding: 20px 0 0 15px; display: grid; grid-template-columns: 102px 126px; grid-auto-rows: 115.500px; justify-items: center; align-content: start; }
.module { display: flex; flex-direction: column; align-items: center; }
.mod-ic { width: 44px; height: 30px; background: #ffffd0; border: 2px solid #111; box-shadow: 3px 3px 0 #777; display: block; flex: none; }
.mod-signal { border-color: #335; background-color: #fff; background-image: radial-gradient(#3a8090 .6px, transparent .9px); background-size: 3px 3px; box-shadow: 3px 3px 0 #7a9ac8; }
.mod-label { margin-top: 17px; line-height: 23px; text-align: center; font-size: 16px; font-weight: 400; letter-spacing: .5px; color: #1e2f4a; white-space: nowrap; }
.mod-selected { background: #f0f0f0; padding: 2px 3px; margin-top: 15px; }

.scroll-v { display: flex; flex-direction: column; flex: none; }
.sb-btn { height: 25px; border: 1px solid #c8c8c8; display: flex; align-items: center; justify-content: center; flex: none; background: #fff; }
.sb-btn svg { width: 12px; height: 8px; display: block; }
.sb-track { flex: 1; border-left: 1px solid #c8c8c8; border-right: 1px solid #c8c8c8; position: relative; display: flex; flex-direction: column; }
.sb-thumb { background: #d8d8d8; border-top: 1px solid #bbb; border-bottom: 1px solid #bbb; display: flex; align-items: center; justify-content: center; }
.grip { width: 11px; height: 11px; border-top: 2px solid #666; border-bottom: 2px solid #666; position: relative; display: block; }
.grip::after { content: ""; position: absolute; left: 0; right: 0; top: 2.500px; height: 2px; background: #666; }
.scroll-mod { width: 25px; margin: 1px 3px 0 0; height: 352px; }
.scroll-mod .sb-thumb { height: 73px; margin-top: 142px; }

/* document area */
.doc { flex: 1; min-width: 0; margin-left: 8px; display: flex; flex-direction: column; height: 763px; }
.doctabs { height: 35px; flex: none; display: flex; align-items: flex-end; border-top: 1px solid #b4b4b4; border-left: 1px solid #b4b4b4; position: relative; }
.doctab { height: 31px; display: flex; align-items: center; }
.doc-ic { width: 23px; height: 25px; display: block; flex: none; }
.doc-a { font: 15px "Liberation Sans", sans-serif; fill: #8a3020; text-anchor: middle; }
.doctab-active { width: 329px; margin-left: 3px; background: linear-gradient(#b6e29a, #8fcc78 70%); clip-path: polygon(0 100%, 30px 0, 325px 0, 329px 10%, 329px 100%); padding-left: 38px; font-weight: 700; font-size: 15.500px; color: #142814; }
.doctab-name { margin-left: 17px; letter-spacing: .32px; flex: 1; }
.doc-x { width: 12px; height: 12px; margin-right: 15px; flex: none; }
.doctab-other { width: 125px; background: linear-gradient(#fdf0d8, #fde8c4 60%, #f7d7a5); border: 1px solid #bbb; border-bottom: 0; border-radius: 4px 4px 0 0; padding-left: 13px; font-size: 15.500px; font-weight: 400; color: #222; letter-spacing: .8px; gap: 9px; margin-left: 0; }
.doctabs-more { position: absolute; right: -5px; top: 15px; width: 10px; height: 6px; }

.docframe { flex: 1; min-height: 0; display: flex; flex-direction: column; border-top: 5px solid #8fcc78; border-left: 6px solid #8fcc78; border-bottom: 4px solid #a8e080; }
.canvas-row { height: 473px; flex: none; display: flex; border-top: 1px solid #666; }
.canvas { width: 1611px; height: 472px; display: block; flex: none; background: #fff; }
.scroll-canvas { width: 14px; height: 472px; margin-top: 0; }
.scroll-canvas .sb-btn svg { margin-left: 4px; width: 14px; flex: none; }
.thumb-canvas { height: 24px; margin-top: 199px; }
.wires path { fill: none; stroke: #111; stroke-width: 1.500; }
.wires-thin path { fill: none; stroke: #111; stroke-width: 1.200; }
.nt { font: 8px "Liberation Sans", sans-serif; fill: #353560; text-anchor: middle; }
.sm { font: 5px "Liberation Sans", sans-serif; fill: #444; }
.blue { fill: #4a5ac8; }
.cc { font: 5.500px "Liberation Sans", sans-serif; fill: #4a5a88; }
.blue-line { fill: none; stroke: #1520a0; stroke-width: 2; }
.vbox { fill: #bcbcbc; stroke: #111; stroke-width: 1.500; }
.val { font-family: "Liberation Sans", sans-serif; fill: #0a1fd8; }
.v30 { font-size: 30px; } .v32 { font-size: 32px; } .v38 { font-size: 38px; } .v50 { font-size: 50px; } .v67 { font-size: 67px; } .v74 { font-size: 74.500px; }
.lab { font-family: "Liberation Sans", sans-serif; fill: #1e2e40; }
.l115 { font-size: 11.500px; } .l12 { font-size: 12px; } .l155 { font-size: 15.500px; } .l22 { font-size: 22.300px; } .l25 { font-size: 25px; }
.cursor { fill: #fff; stroke: #333; stroke-width: 1; }
.cursor-ring { fill: none; stroke: #222; stroke-width: 1.500; }

.scroll-h { height: 26px; flex: none; display: flex; border-top: 2px solid #c8c8c8; border-bottom: 2px solid #c8c8c8; }
.sb-btn-h { width: 25px; flex: none; border-left: 1px solid #c8c8c8; border-right: 1px solid #c8c8c8; display: flex; align-items: center; justify-content: center; }
.sb-btn-h svg { width: 8px; height: 12px; display: block; }
.sb-track-h { flex: 1; padding-left: 936px; }
.sb-thumb-h { width: 26px; height: 100%; background: #dcdcdc; border-left: 1px solid #c8c8c8; border-right: 1px solid #c8c8c8; }
.scroll-corner { width: 14px; flex: none; background: #f0f0f0; }
.sash { height: 8px; flex: none; background: #f0f0f0; }
.tablepane { flex: 1; min-height: 0; display: flex; justify-content: space-between; border-top: 2px solid #555; overflow: hidden; }
.sheet { width: 441px; display: grid; grid-template-columns: 65px 267px 109px; grid-template-rows: 28px 31px 30px 31px 31px 31px 28px; font: 16px "Liberation Sans", sans-serif; letter-spacing: .45px; color: #222; overflow: hidden; }
.cell { overflow: hidden; white-space: nowrap; }
.rh { background: #f0f0f0; border-bottom: 2px solid #111; border-right: 2px solid #111; padding: 1px 0 0 3px; line-height: 26px; }
.rh-sel { background: #0a0a0a; color: #fff; display: flex; align-items: center; gap: 14px; padding: 0 0 0 7px; }
.row-arrow { width: 10px; height: 16px; display: block; }
.hd { background: #f0f0f0; border-bottom: 2px solid #111; border-right: 2px solid #111; line-height: 29px; }
.name-hd { padding-left: 6px; letter-spacing: .3px; }
.asg-hd { text-align: center; letter-spacing: .5px; }
.nm { padding-left: 3px; line-height: 26px; border-bottom: 1px dotted #333; border-right: 1px dotted #333; }
.nm-sel { border: 3px solid #000; line-height: 20px; padding-left: 1px; }
.as { padding: 2px 1px 0 3px; border-bottom: 1px dotted #333; border-right: 1px dotted #333; }
.as-sel { background: #fff; }
.rows { display: block; width: 104px; height: 25px; background: #dcdcdc; border: 1px solid #888; text-align: center; line-height: 25px; letter-spacing: .6px; color: #222; }
.rows-sel { background: #1e1e1e; color: #d8d8d8; }
.scroll-table { width: 13px; height: 206px; }
.scroll-table .sb-btn svg { margin-left: 4px; width: 13px; flex: none; }
.thumb-table { height: 46px; margin-top: 39px; }
.thumb-table .grip { margin-left: 8px; flex: none; }

/* bottom */
.panel-foot { flex: 1; display: grid; grid-auto-rows: 31px; width: 278px; background: #fff; }
.foot-row { display: grid; grid-template-columns: 1fr auto 1fr; align-items: center; }
.foot-text { font: 18.500px "Liberation Sans", sans-serif; color: #1a2030; }
.foot-ic { width: 18px; height: 20px; display: block; margin-left: 17px; }
.foot-row:last-child .foot-ic { width: 22px; height: 21px; margin-left: 15px; }
.foot-row .foot-right { justify-self: end; width: 22px; height: 23px; margin: 0 5px 0 0; }
.status { flex: 0 0 20px; background: #2c5a96; color: #e4ecf6; display: flex; overflow: hidden; font-weight: 400; letter-spacing: .3px; line-height: 22px; }
.status-msg { width: 1699px; padding: 6px 0 0 0; }
.status-cell { border-left: 2px solid #d8e0ea; margin-top: 2px; }
.status-mid { width: 92px; }
.status-xy { flex: 1; padding: 4px 0 0 5px; white-space: nowrap; }
```
